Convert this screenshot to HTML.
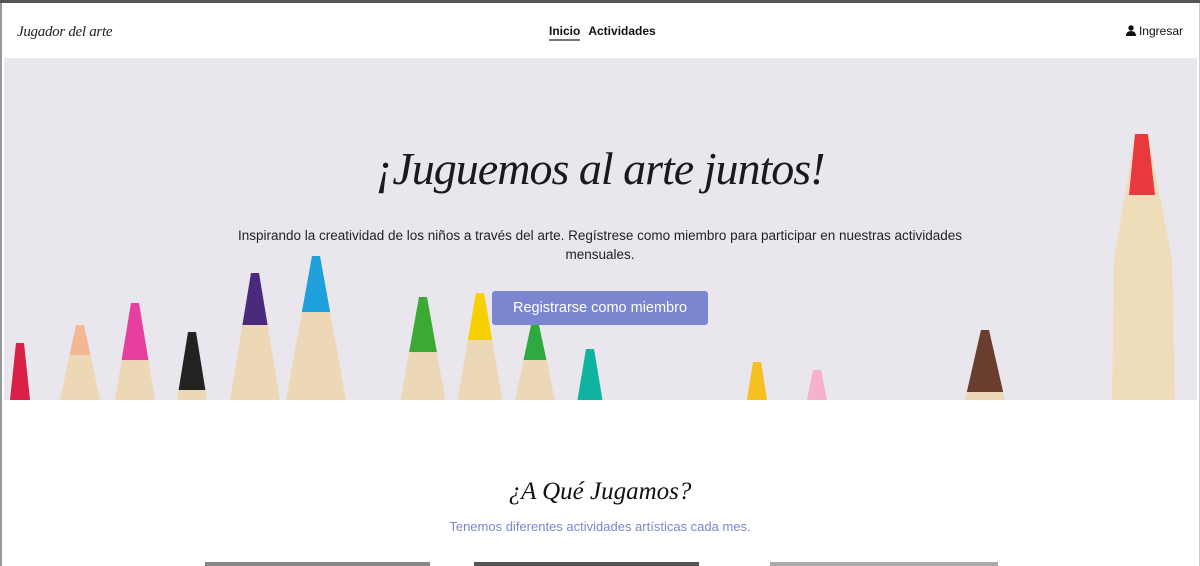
<!DOCTYPE html>
<html><head><meta charset="utf-8">
<style>
*{margin:0;padding:0;box-sizing:border-box}
body{width:1200px;height:566px;overflow:hidden;background:#fff;font-family:"Liberation Sans",sans-serif;position:relative}
.topbar{position:absolute;left:0;top:0;width:1200px;height:3px;background:#555}
.lb{position:absolute;left:0;top:3px;width:2px;height:563px;background:#9a9a9a}
.rb{position:absolute;right:0;top:3px;width:1px;height:563px;background:#ccc}
.brand{position:absolute;left:17px;top:24px;font:italic 15px "Liberation Serif",serif;color:#222;letter-spacing:-0.3px}
.nav{position:absolute;left:549px;top:24px;font-weight:bold;font-size:12px;color:#111}
.nav span{margin-right:8px}
.nav .a{border-bottom:2px solid #777;padding-bottom:1px}
.login{position:absolute;right:17px;top:24px;font-size:12px;color:#111}
.hero{position:absolute;left:4px;top:58px;width:1193px;height:342px;background:#e9e7ed;overflow:hidden}
h1{position:absolute;left:0;width:1200px;top:142px;text-align:center;font:italic 46px "Liberation Serif",serif;color:#1a1a1a;letter-spacing:-1px}
.sub{position:absolute;left:215px;width:770px;top:226px;text-align:center;font-size:13.5px;line-height:19px;color:#222;letter-spacing:0}
.btn{position:absolute;left:492px;top:291px;width:216px;height:34px;background:#7c86d0;color:#fff;border-radius:3px;font-size:14.5px;text-align:center;line-height:34px}
h2{position:absolute;left:0;width:1200px;top:478px;text-align:center;font:italic 25px "Liberation Serif",serif;color:#111}
.p2{position:absolute;left:0;width:1200px;top:519px;text-align:center;font-size:13px;color:#7c86d0}
.card{position:absolute;top:562px;height:4px;background:#888}
</style></head><body>
<div class="topbar"></div><div class="lb"></div><div class="rb"></div>
<div class="brand">Jugador del arte</div>
<div class="nav"><span class="a">Inicio</span><span>Actividades</span></div>
<div class="login"><svg width="10" height="11" viewBox="0 0 10 11" style="vertical-align:-1px"><circle cx="5" cy="3" r="2.7" fill="#111"/><path d="M0 11 Q0 6 5 6 Q10 6 10 11Z" fill="#111"/></svg> Ingresar</div>
<div class="hero"><svg id="pc" width="1193" height="342" viewBox="4 58 1193 342"></svg></div>
<h1>¡Juguemos al arte juntos!</h1>
<div class="sub">Inspirando la creatividad de los niños a través del arte. Regístrese como miembro para participar en nuestras actividades mensuales.</div>
<div class="btn">Registrarse como miembro</div>
<h2>¿A Qué Jugamos?</h2>
<div class="p2">Tenemos diferentes actividades artísticas cada mes.</div>
<div class="card" style="left:205px;width:225px"></div>
<div class="card" style="left:474px;width:225px;background:#555"></div>
<div class="card" style="left:770px;width:228px;background:#aaa"></div>
<script>
var P=[[20,343,400,20,'#d81f45'],[80,325,355,40,'#f2b795'],[135,303,360,40,'#e63fa0'],[192,332,390,30,'#222'],[255,273,325,50,'#4a2a7a'],[316,256,312,60,'#1ea0dc'],[423,297,352,45,'#3aaa35'],[480,293,340,45,'#f6d000'],[535,325,360,40,'#2faa40'],[590,349,400,25,'#0fb3a0'],[757,362,400,20,'#f5c020'],[817,370,400,20,'#f4b2cc'],[985,330,392,40,'#6a3e2e']];
var s='';
function w(t,W,top,y){return t+(W-t)*(y-top)/(400-top);}
P.forEach(function(p){var cx=p[0],top=p[1],cb=p[2],W=p[3],c=p[4],t=8;
var wb=w(t,W,top,cb);
s+='<polygon points="'+(cx-t/2)+','+top+' '+(cx+t/2)+','+top+' '+(cx+W/2)+',400 '+(cx-W/2)+',400" fill="#ecd8b6"/>';
s+='<polygon points="'+(cx-t/2)+','+top+' '+(cx+t/2)+','+top+' '+(cx+wb/2)+','+cb+' '+(cx-wb/2)+','+cb+'" fill="'+c+'"/>';});
s+='<polygon points="1135,134 1148,134 1172,260 1175,400 1112,400 1114,260" fill="#efdcbb"/>';
s+='<polygon points="1135,134 1148,134 1155,195 1129,195" fill="#e8393f"/>';
document.getElementById('pc').innerHTML=s;
</script>
</body></html>
